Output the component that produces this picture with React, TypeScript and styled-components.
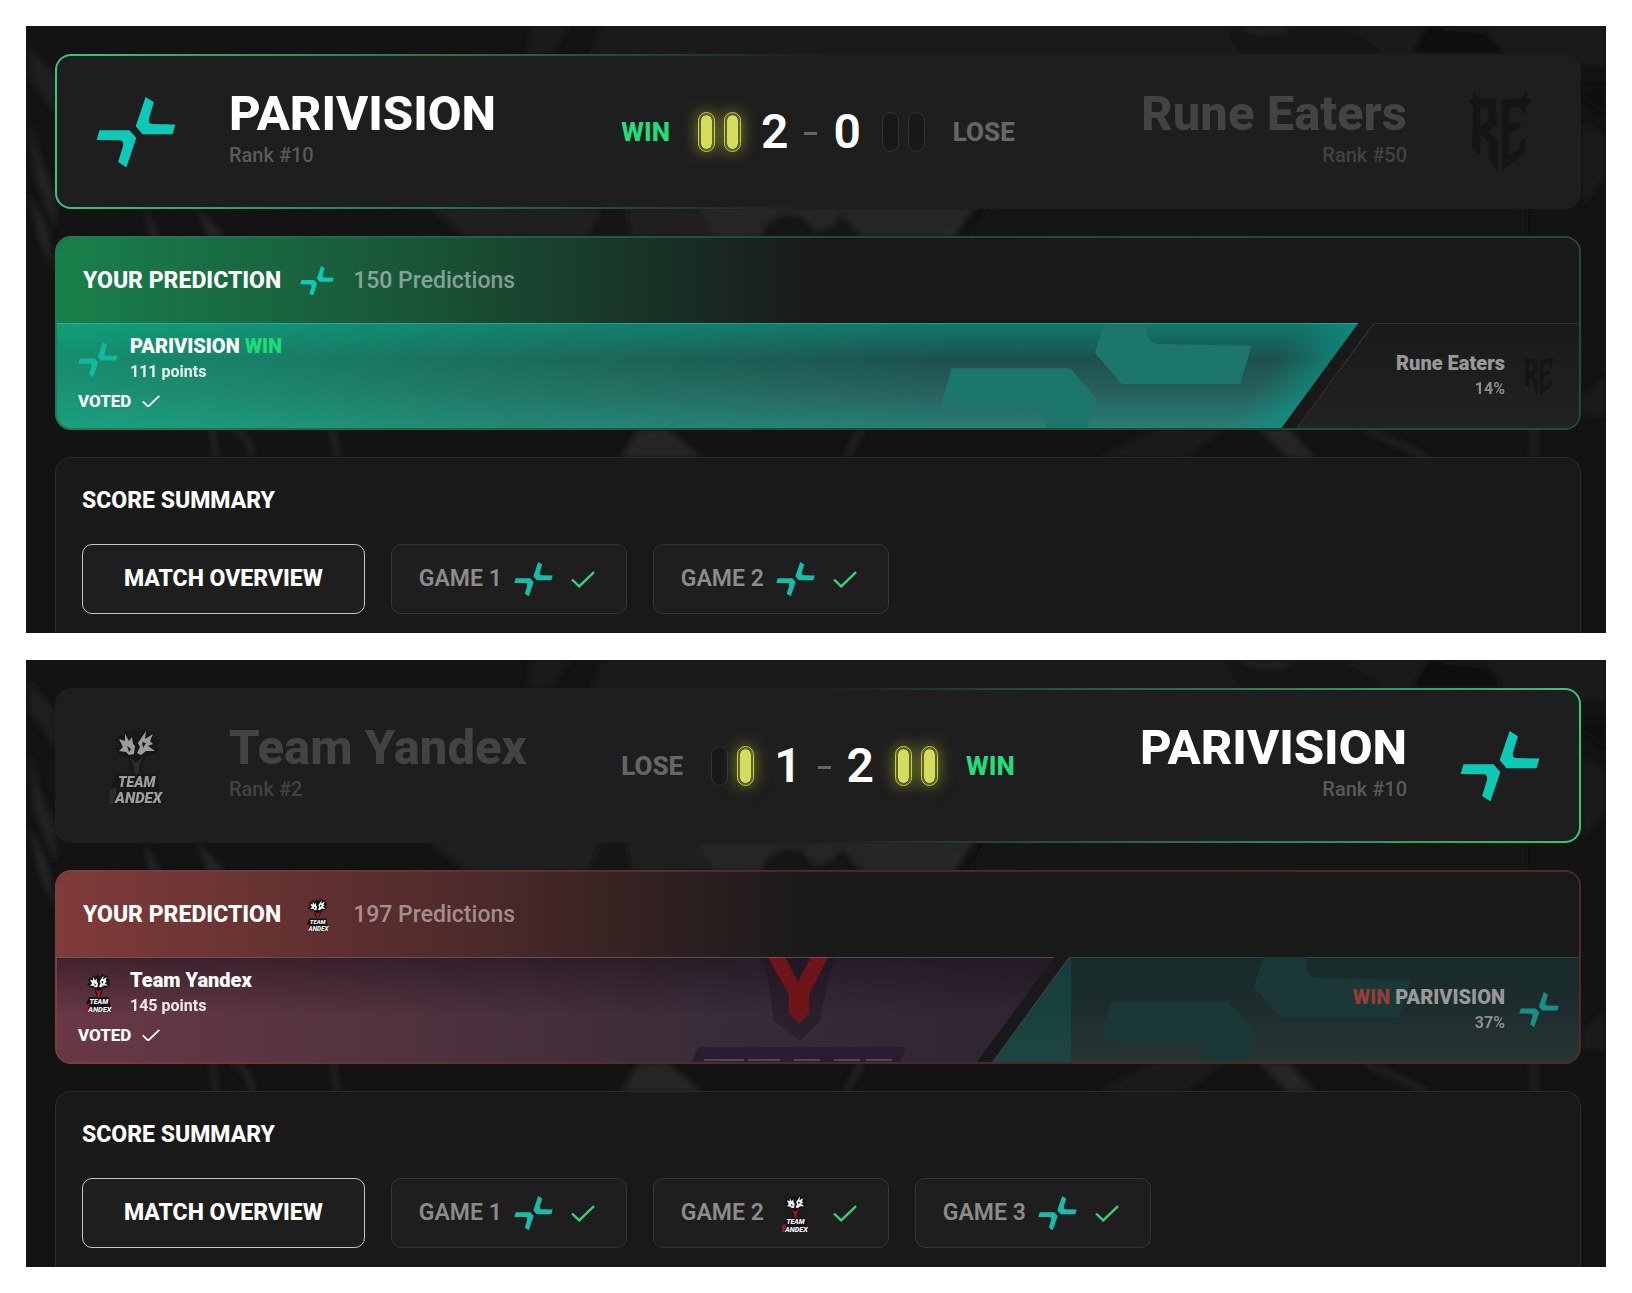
import React from 'react';
import styled, { createGlobalStyle, css } from 'styled-components';

type TeamId = 'parivision' | 'rune' | 'yandex';
type Tone = 'green' | 'red';

interface Team {
  name: string;
  rank: number;
}

interface Side {
  team: TeamId;
  score: number;
}

interface Match {
  left: Side;
  right: Side;
  tone: Tone;
  predictions: number;
  leftPoints: number;
  rightPercent: number;
  share: number;
  games: TeamId[];
}

const teams: Record<TeamId, Team> = {
  parivision: { name: 'PARIVISION', rank: 10 },
  rune: { name: 'Rune Eaters', rank: 50 },
  yandex: { name: 'Team Yandex', rank: 2 },
};

const matches: Match[] = [
  {
    left: { team: 'parivision', score: 2 },
    right: { team: 'rune', score: 0 },
    tone: 'green',
    predictions: 150,
    leftPoints: 111,
    rightPercent: 14,
    share: 171,
    games: ['parivision', 'parivision'],
  },
  {
    left: { team: 'yandex', score: 1 },
    right: { team: 'parivision', score: 2 },
    tone: 'red',
    predictions: 197,
    leftPoints: 145,
    rightPercent: 37,
    share: 131,
    games: ['parivision', 'yandex', 'parivision'],
  },
];

const GlobalStyle = createGlobalStyle`
  * { box-sizing: border-box; }
  body {
    margin: 0;
    background: #ffffff;
    color: #ffffff;
    font-family: Roboto, "Noto Sans", sans-serif;
  }
  h2, h3, p { margin: 0; }
  button { font-family: inherit; cursor: pointer; }
`;

const Page = styled.main`
  display: flex;
  flex-direction: column;
  gap: 27px;
  padding: 26px;
`;

const Panel = styled.section`
  position: relative;
  isolation: isolate;
  display: flex;
  flex-direction: column;
  gap: 27px;
  padding: 28px 25px 0 29px;
  overflow: hidden;
  background: #131313;
`;

const Backdrop = styled.svg`
  position: absolute;
  inset: 0;
  z-index: -1;
  width: 100%;
  height: 100%;
  opacity: 0.8;
`;

/* ---------- score header ---------- */

const Hero = styled.header<{ $winner: 'left' | 'right' }>`
  display: grid;
  grid-template-columns: 1fr auto 1fr;
  align-items: center;
  min-height: 155px;
  padding: 0 39px;
  border: 2px solid transparent;
  border-radius: 16px;
  background:
    linear-gradient(#1e1e1e, #1e1e1e) padding-box,
    linear-gradient(
        ${(p) => (p.$winner === 'left' ? '90deg' : '270deg')},
        #3cc47c,
        #1e1e1e 50%
      )
      border-box;
`;

const TeamBlock = styled.div<{ $reverse?: boolean }>`
  display: flex;
  flex-direction: ${(p) => (p.$reverse ? 'row-reverse' : 'row')};
  align-items: center;
  gap: 53px;
  text-align: ${(p) => (p.$reverse ? 'right' : 'left')};
`;

const TeamText = styled.div`
  display: flex;
  flex-direction: column;
  gap: 4px;
  padding-bottom: 8px;
`;

const TeamName = styled.h2<{ $dim: boolean }>`
  font-size: 49px;
  font-weight: 800;
  line-height: 50px;
  white-space: nowrap;
  color: ${(p) => (p.$dim ? '#434343' : '#ffffff')};
`;

const Rank = styled.p<{ $dim: boolean }>`
  font-size: 20px;
  font-weight: 500;
  line-height: 24px;
  color: ${(p) => (p.$dim ? '#424242' : '#5a5a5a')};
`;

const ScoreRow = styled.div`
  display: flex;
  align-items: center;
`;

const Outcome = styled.span<{ $win: boolean }>`
  font-size: 26px;
  font-weight: 800;
  line-height: 30px;
  color: ${(p) => (p.$win ? '#22dd7c' : '#666666')};
`;

const Pills = styled.div`
  display: flex;
  gap: 9px;
  margin: 0 20px 0 28px;

  &:last-of-type {
    margin: 0 28px 0 21px;
  }
`;

const Pill = styled.span<{ $lit: boolean }>`
  width: 17px;
  height: 40px;
  padding: 2px;
  border: 1px solid #333333;
  border-radius: 9px;
  background: #181818;

  ${(p) =>
    p.$lit &&
    css`
      border-color: #c6cd5c;
      background: #d4dd5e content-box;
      background-clip: content-box;
      box-shadow: 0 0 16px rgba(205, 215, 50, 0.55), inset 0 0 0 2px #5d6320;
    `}
`;

const Score = styled.strong`
  font-size: 48px;
  font-weight: 600;
  line-height: 50px;
`;

const Dash = styled.span`
  width: 13px;
  height: 3px;
  margin: 4px 16px 0;
  background: #666666;
`;

/* ---------- prediction card ---------- */

const PredictionCard = styled.section<{ $tone: Tone }>`
  overflow: hidden;
  border: 2px solid transparent;
  border-radius: 16px;
  background:
    linear-gradient(#191919, #191919) padding-box,
    ${(p) =>
      p.$tone === 'green'
        ? 'linear-gradient(90deg, #1d7f56, #1e4a3a 50%, #234a37) border-box'
        : 'linear-gradient(90deg, #7d4040, #46292a 50%, #4a2b29) border-box'};
`;

const PredictionHeader = styled.div<{ $tone: Tone }>`
  display: flex;
  align-items: center;
  height: 85px;
  padding: 0 26px;
  background: ${(p) =>
    p.$tone === 'green'
      ? 'linear-gradient(90deg, #19804b, #195236 25%, #191919 50%)'
      : 'linear-gradient(90deg, #803b3a, #4e2a2a 27%, #191919 50%)'};
`;

const Heading = styled.h3`
  font-size: 23px;
  font-weight: 800;
  line-height: 30px;
`;

const HeaderLogo = styled.span`
  display: flex;
  margin: 0 19px;
`;

const Count = styled.p`
  font-size: 23px;
  font-weight: 500;
  line-height: 30px;
  color: rgba(255, 255, 255, 0.48);
`;

const Bar = styled.div<{ $share: number }>`
  display: grid;
  grid-template-columns: ${(p) => p.$share}fr ${(p) => 200 - p.$share}fr;
  height: 105px;
`;

const LeftSegment = styled.div<{ $tone: Tone }>`
  position: relative;
  isolation: isolate;
  overflow: hidden;
  padding: 11px 21px 0;
  clip-path: polygon(0 0, 100% 0, calc(100% - 77px) 100%, 0 100%);
  background: ${(p) =>
    p.$tone === 'green'
      ? `linear-gradient(126deg, transparent calc(100% - 106px), rgba(10, 150, 134, 0.6) calc(100% - 62px)),
         linear-gradient(90deg, rgba(16, 190, 134, 0.55), rgba(24, 150, 115, 0.4) 35%, transparent 68%),
         linear-gradient(180deg, #0f796c, #1d514d 35%, #28605b 65%, #287e75)`
      : `linear-gradient(180deg, rgba(24, 12, 22, 0.5), transparent 55%),
         linear-gradient(90deg, #693845, #543440 28%, #372b37 68%, #2e2532)`};

  &::after {
    content: '';
    position: absolute;
    inset: 0 0 auto;
    height: 1px;
    background: ${(p) => (p.$tone === 'green' ? 'rgba(90, 200, 175, 0.4)' : 'rgba(255, 255, 255, 0.22)')};
  }
`;

const RightSegment = styled.div<{ $team: TeamId }>`
  position: relative;
  isolation: isolate;
  display: flex;
  align-items: center;
  justify-content: flex-end;
  gap: 14px;
  margin-left: -62px;
  padding-right: 20px;
  overflow: hidden;
  clip-path: polygon(77px 0, 100% 0, 100% 100%, 0 100%);
  background: ${(p) => (p.$team === 'rune' ? '#303030' : '#2f4343')};

  &::before {
    content: '';
    position: absolute;
    inset: 1px 0 0 1px;
    z-index: -2;
    clip-path: polygon(77px 0, 100% 0, 100% 100%, 0 100%);
    background: ${(p) =>
      p.$team === 'rune'
        ? 'linear-gradient(180deg, #1a1a1a, #222222)'
        : `linear-gradient(90deg, rgba(14, 100, 92, 0.35) 78px, transparent 78px),
           linear-gradient(180deg, #182a2a, #1d2d2d 50%, #293535)`};
  }
`;

const Watermark = styled.span<{ $right: number }>`
  position: absolute;
  top: 0;
  right: ${(p) => p.$right}px;
  bottom: 0;
  z-index: -1;
  display: flex;
  align-items: center;
`;

const VoteRow = styled.div`
  display: flex;
  align-items: center;
  gap: 12px;
`;

const VoteText = styled.div<{ $dim?: boolean }>`
  color: ${(p) => (p.$dim ? '#999999' : '#ffffff')};
  text-align: ${(p) => (p.$dim ? 'right' : 'left')};
`;

const VoteName = styled.p`
  font-size: 20px;
  font-weight: 900;
  line-height: 24px;
  white-space: nowrap;
`;

const Win = styled.span<{ $tone: Tone }>`
  color: ${(p) => (p.$tone === 'green' ? '#1fdc78' : '#953d3b')};
`;

const VoteValue = styled.p`
  margin-top: 2px;
  font-size: 16px;
  font-weight: 700;
  line-height: 24px;
  opacity: 0.9;
`;

const Voted = styled.p`
  display: flex;
  align-items: center;
  gap: 11px;
  padding-top: 7px;
  font-size: 17px;
  font-weight: 800;
  line-height: 20px;
`;

/* ---------- score summary ---------- */

const Summary = styled.section`
  padding: 28px 26px 19px;
  border: 1px solid #2b2b2b;
  border-bottom: 0;
  border-radius: 16px 16px 0 0;
  background: #191919;
`;

const Tabs = styled.div`
  display: flex;
  gap: 26px;
  margin-top: 28px;
`;

const Tab = styled.button<{ $active?: boolean }>`
  display: flex;
  align-items: center;
  height: 70px;
  padding: ${(p) => (p.$active ? '0 41px' : '0 31px 0 27px')};
  border: 1px solid ${(p) => (p.$active ? '#c4c4c4' : '#353535')};
  border-radius: 10px;
  background: #1e1e1e;
  color: ${(p) => (p.$active ? '#ffffff' : '#8c8c8c')};
  font-size: 23px;
  font-weight: ${(p) => (p.$active ? 800 : 600)};
  line-height: 30px;
  white-space: nowrap;
`;

const TabLogo = styled.span`
  display: flex;
  margin: 0 18px 0 12px;
`;

/* ---------- icons ---------- */

const LogoSlot = styled.span<{ $size: number; $dim?: boolean }>`
  display: inline-flex;
  flex: none;
  align-items: center;
  justify-content: center;
  width: ${(p) => p.$size}px;
  opacity: ${(p) => (p.$dim ? 0.6 : 1)};
  filter: ${(p) => (p.$dim ? 'grayscale(1)' : 'none')};
`;

const TickIcon = styled.svg`
  flex: none;
  fill: none;
  stroke-width: 2.4;
`;

function Tick({ width, color }: { width: number; color: string }) {
  return (
    <TickIcon width={width} height={(width * 17) / 24} viewBox="0 0 24 17" stroke={color} aria-hidden="true">
      <path d="M1 8.5 8.2 15.4 23 1.2" />
    </TickIcon>
  );
}

const PARI_ARM =
  'M49.6 0 57.9 5.3 53 21.5Q52.2 26.6 55.8 27.1L79.4 27.5 76.5 37.2H46.5L39.7 29.3Z';

function PariMark({ width, color = '#0ec9b5' }: { width: number; color?: string }) {
  return (
    <svg width={width} height={(width * 70) / 80} viewBox="0 0 80 70" fill={color} aria-hidden="true">
      <path d={PARI_ARM} />
      <path d={PARI_ARM} transform="rotate(180 40 35.2)" />
    </svg>
  );
}

function RuneMark({ height }: { height: number }) {
  return (
    <svg width={(height * 62) / 78} height={height} viewBox="0 0 62 78" fill="#151515" aria-hidden="true">
      <path d="M0 8 5 6 6 0 9 6 27 7 28 32 20 38 29 48V78L21 66V50L12 42V62L4 54 5 15Z M12 15V33L20 28V14Z" fillRule="evenodd" />
      <path d="M33 8 52 6 57 0 58 6 62 8 57 13 56 23 50 14 40 16V31L50 29 52 35 40 40V62L50 56V50L56 44 55 60 33 76Z" />
    </svg>
  );
}

const MarkText = styled.text`
  font-family: Roboto, sans-serif;
  font-style: italic;
  font-weight: 900;
  fill: #f2f2f2;
`;

function YandexMark({ height }: { height: number }) {
  return (
    <svg width={(height * 54) / 80} height={height} viewBox="0 0 54 80" aria-hidden="true">
      <path d="M10 9 15 9 16 4 21 7 25 3 29 7 36 2 39 5 46 6 45 11 50 14 47 20 50 25 43 29 36 31 32 45 27 50 22 44 19 31 10 29 9 25 4 24 9 19 6 14Z" fill="#141216" />
      <path d="M8 48H48L53 78H2V62Z" fill="#151317" />
      <path d="M20 31 26 36 28 36 34 31 30 41 30 46 27 49 25 46V41Z" fill="#b3141c" />
      <path d="M10 13 16 15 16 8 20 15 23 11 24 18 26 20 25 28 20 29 17 26 10 25 14 21Z" fill="#f2f2f2" />
      <path d="M29 17 33 11 37 5 36 13 44 8 41 15 44 18 39 20 46 25 37 25 32 29 28 27 31 21Z" fill="#f2f2f2" />
      <path d="M18 20 22 23 20 26ZM33 16 34 22 37 17Z" fill="#141216" />
      <path d="M1 63 8 62 7 68 4 78H0Z" fill="#b3141c" />
      <MarkText x="9" y="61" fontSize="14">TEAM</MarkText>
      <MarkText x="6" y="77" fontSize="15">ANDEX</MarkText>
    </svg>
  );
}

function Logo({ team, size, dim, color }: { team: TeamId; size: number; dim?: boolean; color?: string }) {
  return (
    <LogoSlot $size={size} $dim={dim}>
      {team === 'parivision' && <PariMark width={size} color={color} />}
      {team === 'rune' && <RuneMark height={size} />}
      {team === 'yandex' && <YandexMark height={size} />}
    </LogoSlot>
  );
}

function YandexWatermark() {
  return (
    <svg width="216" height="105" viewBox="0 0 216 105" aria-hidden="true">
      <path d="M70 0H144L136 22 128 64 108 84 82 64 76 24Z" fill="#1d1524" opacity=".45" />
      <path d="M76 0H93L106 25 119 0H136L117 38V56L107 67 97 56V38Z" fill="#6e1519" />
      <path d="M6 90H214L208 105H0Z" fill="#2a1c31" />
      <path d="M12 103H52M56 103H88M102 103H128M142 103H168M174 103H200" stroke="#54435a" strokeWidth="2" />
    </svg>
  );
}

function PanelBackdrop() {
  return (
    <Backdrop viewBox="0 0 1580 607" preserveAspectRatio="none" aria-hidden="true">
      <defs>
        <filter id="smoke" x="-5%" y="-5%" width="110%" height="110%">
          <feGaussianBlur stdDeviation="3" />
        </filter>
      </defs>
      <g filter="url(#smoke)">
        <path d="M575 0H1580V40H560Z" fill="#1b1b1b" />
        <path d="M505 0H545L525 28H500Z" fill="#1a1a1a" />
        <path d="M1200 6Q1290 2 1330 8L1360 28H1215Z" fill="#121212" />
        <path d="M1220 0Q1236 10 1262 2" stroke="#333333" strokeWidth="3" fill="none" />
        <path d="M1400 2 1460 6 1480 28H1385Z" fill="#111111" />
        <path d="M3 20 30 50V90L3 50Z" fill="#242424" />
        <path d="M3 90 14 130 30 170V205L8 150Z" fill="#262626" />
        <path d="M2 165 20 200 30 250 14 215Z" fill="#2b2b2b" />
        <path d="M118 180 135 212H124ZM170 180 200 212H182Z" fill="#2c2c2c" />
        <path d="M400 180H946L925 212H440Z" fill="#202020" />
        <path d="M670 180H946L928 212H690Z" fill="#2b2b2b" />
        <path d="M575 182H600L606 212H562Z" fill="#171717" />
        <path d="M735 212 742 196 758 188 775 190 790 206 806 200 816 188 836 212Z" fill="#151515" />
        <path d="M920 212 948 180" stroke="#3a3a3a" strokeWidth="2" />
        <path d="M962 180H1500V212H944Z" fill="#121212" />
        <path d="M186 402 190 432M205 402Q226 410 226 432M306 402 312 432" stroke="#303030" strokeWidth="4" fill="none" />
        <path d="M594 432 612 404 640 402 678 432Z" fill="#2a2a2a" />
        <path d="M820 432 836 402" stroke="#2c2c2c" strokeWidth="5" />
        <path d="M1070 432 1128 402H1200L1160 432Z" fill="#1e1e1e" />
        <path d="M1232 402H1262L1290 432H1262Z" fill="#2a2a2a" />
        <path d="M1340 404Q1380 420 1400 432M1508 402V432" stroke="#292929" strokeWidth="5" fill="none" />
        <path d="M1556 60H1580V90L1556 72Z" fill="#0e0e0e" />
        <path d="M1556 96 1580 110V150L1556 180Z" fill="#1d1d1d" />
        <path d="M1556 370 1580 350V390H1556Z" fill="#1b1b1b" />
      </g>
    </Backdrop>
  );
}

function PillPair({ count, mirror }: { count: number; mirror: boolean }) {
  const lit = mirror ? [count > 0, count > 1] : [count > 1, count > 0];
  return (
    <Pills>
      {lit.map((on, i) => (
        <Pill key={i} $lit={on} />
      ))}
    </Pills>
  );
}

function MatchPanel({ match }: { match: Match }) {
  const { left, right, tone } = match;
  const leftWins = left.score > right.score;
  const leftTeam = teams[left.team];
  const rightTeam = teams[right.team];

  return (
    <Panel>
      <PanelBackdrop />

      <Hero $winner={leftWins ? 'left' : 'right'}>
        <TeamBlock>
          <Logo team={left.team} size={80} dim={!leftWins} />
          <TeamText>
            <TeamName $dim={!leftWins}>{leftTeam.name}</TeamName>
            <Rank $dim={!leftWins}>Rank #{leftTeam.rank}</Rank>
          </TeamText>
        </TeamBlock>
        <ScoreRow>
          <Outcome $win={leftWins}>{leftWins ? 'WIN' : 'LOSE'}</Outcome>
          <PillPair count={left.score} mirror={false} />
          <Score>{left.score}</Score>
          <Dash />
          <Score>{right.score}</Score>
          <PillPair count={right.score} mirror />
          <Outcome $win={!leftWins}>{leftWins ? 'LOSE' : 'WIN'}</Outcome>
        </ScoreRow>
        <TeamBlock $reverse>
          <Logo team={right.team} size={80} />
          <TeamText>
            <TeamName $dim={leftWins}>{rightTeam.name}</TeamName>
            <Rank $dim={leftWins}>Rank #{rightTeam.rank}</Rank>
          </TeamText>
        </TeamBlock>
      </Hero>

      <PredictionCard $tone={tone}>
        <PredictionHeader $tone={tone}>
          <Heading>YOUR PREDICTION</Heading>
          <HeaderLogo>
            <Logo team={left.team} size={34} />
          </HeaderLogo>
          <Count>{match.predictions} Predictions</Count>
        </PredictionHeader>
        <Bar $share={match.share}>
          <LeftSegment $tone={tone}>
            <Watermark $right={left.team === 'parivision' ? 104 : 146}>
              {left.team === 'parivision' ? <PariMark width={316} color="#1d766b" /> : <YandexWatermark />}
            </Watermark>
            <VoteRow>
              <Logo team={left.team} size={40} color="#12b8a0" />
              <VoteText>
                <VoteName>
                  {leftTeam.name} {leftWins && <Win $tone={tone}>WIN</Win>}
                </VoteName>
                <VoteValue>{match.leftPoints} points</VoteValue>
              </VoteText>
            </VoteRow>
            <Voted>
              VOTED <Tick width={18} color="#ffffff" />
            </Voted>
          </LeftSegment>
          <RightSegment $team={right.team}>
            {right.team === 'parivision' && (
              <Watermark $right={166}>
                <PariMark width={316} color="#1a3835" />
              </Watermark>
            )}
            <VoteText $dim>
              <VoteName>
                {!leftWins && <Win $tone={tone}>WIN</Win>} {rightTeam.name}
              </VoteName>
              <VoteValue>{match.rightPercent}%</VoteValue>
            </VoteText>
            <Logo team={right.team} size={40} color="#169085" />
          </RightSegment>
        </Bar>
      </PredictionCard>

      <Summary>
        <Heading>SCORE SUMMARY</Heading>
        <Tabs>
          <Tab type="button" $active>
            MATCH OVERVIEW
          </Tab>
          {match.games.map((winner, i) => (
            <Tab type="button" key={i}>
              GAME {i + 1}
              <TabLogo>
                <Logo team={winner} size={39} color="#17bdaa" />
              </TabLogo>
              <Tick width={24} color="#3dcf76" />
            </Tab>
          ))}
        </Tabs>
      </Summary>
    </Panel>
  );
}

export default function App() {
  return (
    <>
      <GlobalStyle />
      <Page>
        {matches.map((match, i) => (
          <MatchPanel key={i} match={match} />
        ))}
      </Page>
    </>
  );
}
